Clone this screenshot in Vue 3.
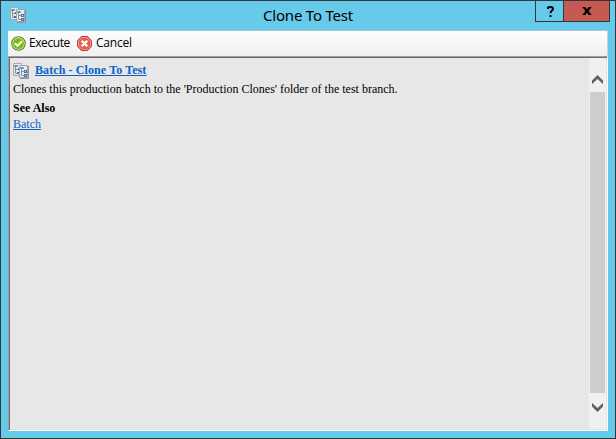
<script setup>
</script>

<template>
  <div class="window">
    <svg width="0" height="0" class="defs" aria-hidden="true">
      <symbol id="batch" viewBox="0 0 16 16">
        <path d="M.5 .5h8v12h-8z" fill="#e2e8ec" stroke="#aaa9a8" />
        <path d="M2.5 3v7.5h2M2.5 6.5h3" fill="none" stroke="#8a939c" />
        <path d="M1.5 2h3v2h-3zM5 5h2v2H5zM4 9h2v2H4z" fill="#3674aa" />
        <path d="M2.5 2.5h1v1h-1z" fill="#d8f1ff" />
        <path d="M6.5 2.5h8v12h-8z" fill="#e6eaed" stroke="#a5a4a4" />
        <path d="M15.5 3v12.5H7" fill="none" stroke="#929191" />
        <path d="M8.5 5v7.5h3M8.5 8.5h3" fill="none" stroke="#8a939c" />
        <path d="M7.5 4h3v2h-3zM11 7h3v3h-3zM11 11h3v3h-3z" fill="#3674aa" />
        <path d="M8.5 4.5h1v1h-1zM12 8h1v1h-1zM12 12h1v1h-1z" fill="#d8f1ff" />
      </symbol>
    </svg>
    <header class="titlebar">
      <svg class="app-icon" width="16" height="16"><use href="#batch" /></svg>
      <h1>Clone To Test</h1>
      <div class="controls">
        <button class="help" aria-label="Help">
          <svg width="7" height="11" viewBox="0 0 7 11"><path d="M1 3V1.5Q2 1 3.5 1Q6 1 6 3Q6 4 4.5 5Q3.5 5.6 3.5 7.3" fill="none" stroke="#000" stroke-width="2" /><path d="M2.5 9h2v2h-2z" /></svg>
        </button>
        <button class="close" aria-label="Close">
          <svg width="10" height="8" viewBox="0 0 10 8"><path d="M.3 0h3L5 2.3 6.7 0h3L6.6 4l3.1 4h-3L5 5.7 3.3 8h-3l3.1-4z" /></svg>
        </button>
      </div>
    </header>
    <nav class="toolbar">
      <button class="action execute">
        <svg width="15" height="15" viewBox="0 0 16 16"><circle cx="8" cy="8" r="7.2" fill="#eef8d9" stroke="#4a8718" stroke-width="1.2" /><circle cx="8" cy="8" r="5.9" fill="#82b911" /><path d="M4.2 7.8 7 10.5l4.8-5" fill="none" stroke="#fff" stroke-width="2.2" /></svg>
        <span>Execute</span>
      </button>
      <button class="action cancel">
        <svg width="15" height="15" viewBox="0 0 16 16"><path d="M5 .7h6L15.3 5v6L11 15.3H5L.7 11V5z" fill="#ffc0b2" stroke="#bd3f37" stroke-width="1.2" /><path d="M5.4 2h5.2L14 5.4v5.2L10.6 14H5.4L2 10.6V5.4z" fill="#ed5b4c" /><path d="m5 5 6 6m0-6-6 6" stroke="#fff" stroke-width="2.4" /></svg>
        <span>Cancel</span>
      </button>
    </nav>
    <main class="panel">
      <article>
        <div class="heading">
          <svg width="16" height="16"><use href="#batch" /></svg>
          <a class="topic">Batch - Clone To Test</a>
        </div>
        <p class="description">Clones this production batch to the 'Production Clones' folder of the test branch.</p>
        <h2>See Also</h2>
        <a class="related">Batch</a>
      </article>
      <div class="scrollbar">
        <svg class="up" width="11" height="9" viewBox="0 0 11 9"><path d="M0 5.5 5.5 0 11 5.5V9L5.5 4 0 9z" fill="#606060" /></svg>
        <div class="thumb"></div>
        <svg class="down" width="11" height="9" viewBox="0 0 11 9"><path d="M0 3.5 5.5 9 11 3.5V0L5.5 5 0 0z" fill="#606060" /></svg>
      </div>
    </main>
  </div>
</template>

<style>
body { margin: 0; overflow: hidden; }
</style>

<style scoped>
* { box-sizing: border-box; }
.window { width: 616px; height: 439px; border: 1px solid #35353c; background: #66caea; display: flex; flex-direction: column; padding: 0 7px 7px; color: #000; }
.defs { position: absolute; }
svg { display: block; flex: none; }
button { font: inherit; border: 0; padding: 0; background: none; display: flex; align-items: center; color: inherit; }
.titlebar { height: 29px; flex: none; display: grid; grid-template-columns: 72px 1fr 72px; }
.app-icon { margin: 6px 0 0 2px; }
h1 { margin: 3px 0 0; font: 15px/22px "Noto Sans", sans-serif; text-align: center; letter-spacing: -.22px; white-space: nowrap; }
.controls { display: flex; width: 75px; height: 21px; border: 1px solid #35353c; border-top: 0; justify-self: end; margin-right: -2px; }
.controls button { justify-content: center; }
.help { width: 27px; padding-left: 1px; }
.controls .close { flex: 1; background: #c45a51; border-left: 1px solid #35353c; }
.toolbar { height: 26px; flex: none; display: flex; padding: 1px 3px 0; border-top: 1px solid #a8c6d1; border-right: 1px solid #c9d2d5; background: linear-gradient(#fdfdfd, #f0f0f0); font: 12px/20px "Open Sans", sans-serif; }
.action { gap: 3px; height: 23px; }
.execute { width: 66px; }
.action span { white-space: nowrap; letter-spacing: -.42px; margin-top: -1px; }
.cancel { gap: 4px; }
.cancel span { letter-spacing: -.2px; }
.panel { flex: 1; display: flex; background: #e7e7e7; border: 1px solid; border-color: #a0a0a0 #fff #fff #a0a0a0; box-shadow: inset 1px 1px #696969, inset -1px -1px #e3e3e3; padding: 1px; }
article { flex: 1; padding: 4px 3px; font: 12px/16px "Liberation Serif", serif; }
.heading { display: flex; align-items: center; gap: 6px; height: 17px; }
.heading svg { margin-top: 1px; }
a { color: #0b61c8; text-decoration: underline; text-underline-offset: 1px; }
.topic { font-weight: bold; line-height: 16px; margin-top: -2px; letter-spacing: .1px; }
.description { margin: 2px 0 0; white-space: nowrap; }
h2 { margin: 3px 0 0; font: bold 12px/16px "Liberation Serif", serif; }
.related { display: block; width: max-content; }
.scrollbar { width: 17px; background: #f0f0f0; display: flex; flex-direction: column; align-items: center; }
.up { margin-top: 17px; }
.thumb { width: 15px; height: 301px; margin-top: 8px; background: #cdcdcd; }
.down { margin-top: 10px; }
</style>
